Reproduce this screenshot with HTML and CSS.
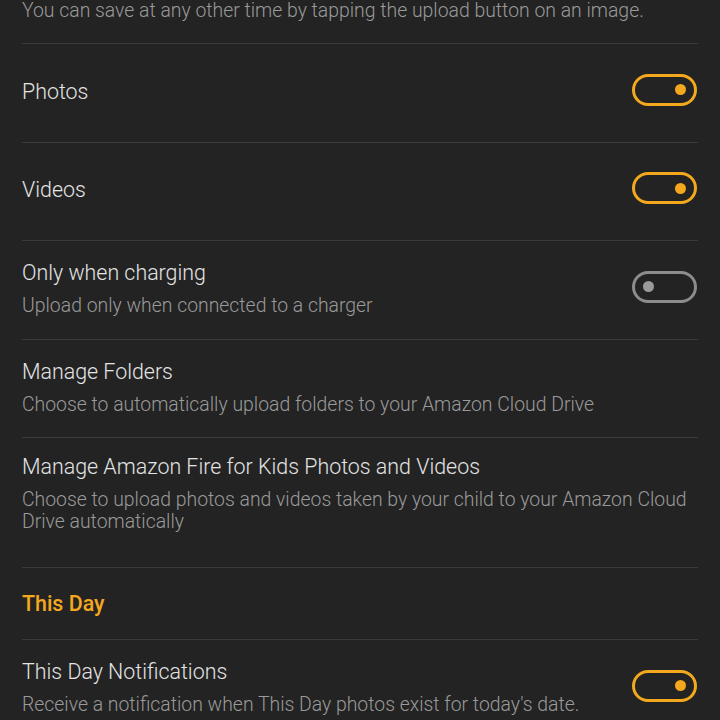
FILE: index.html
```html
<!DOCTYPE html>
<html lang="en">
<head>
  <meta charset="UTF-8">
  <meta name="viewport" content="width=device-width, initial-scale=1.0">
  <title>Auto-Save Settings</title>
  <link rel="stylesheet" href="styles.css">
</head>
<body>
  <ul class="settings">
    <!-- tail of the auto-save description, scrolled up -->
    <li class="item item-note">
      <p class="sub">You can save at any other time by tapping the upload button on an image.</p>
    </li>

    <li class="item">
      <div class="item-text single">
        <p class="title">Photos</p>
      </div>
      <span class="toggle on"><span class="knob"></span></span>
    </li>

    <li class="item">
      <div class="item-text single">
        <p class="title">Videos</p>
      </div>
      <span class="toggle on"><span class="knob"></span></span>
    </li>

    <li class="item">
      <div class="item-text">
        <p class="title">Only when charging</p>
        <p class="sub">Upload only when connected to a charger</p>
      </div>
      <span class="toggle"><span class="knob"></span></span>
    </li>

    <li class="item">
      <div class="item-text">
        <p class="title">Manage Folders</p>
        <p class="sub">Choose to automatically upload folders to your Amazon Cloud Drive</p>
      </div>
    </li>

    <li class="item">
      <div class="item-text tall">
        <p class="title">Manage Amazon Fire for Kids Photos and Videos</p>
        <p class="sub">Choose to upload photos and videos taken by your child to your Amazon Cloud Drive automatically</p>
      </div>
    </li>

    <!-- Section: This Day -->
    <li class="item section">
      <h2>This Day</h2>
    </li>

    <li class="item">
      <div class="item-text">
        <p class="title">This Day Notifications</p>
        <p class="sub">Receive a notification when This Day photos exist for today's date.</p>
      </div>
      <span class="toggle on"><span class="knob"></span></span>
    </li>
  </ul>
</body>
</html>
```

FILE: styles.css
```css
/* General Reset */
* {
  margin: 0;
  padding: 0;
  box-sizing: border-box;
}

body {
  font-family: 'Roboto', 'Liberation Sans', sans-serif;
  font-weight: 300;
  background-color: #232323;
  color: #e4e4e4;
  overflow: hidden;
}

/* Settings list */
.settings {
  list-style: none;
  margin: 0 22px;
}

.item {
  display: flex;
  align-items: center;
  min-height: 98.5px;
  border-bottom: 1px solid #3a3a3a;
}

.item-note {
  min-height: 0;
  padding-bottom: 21px;
}

.item-text {
  flex: 1;
  padding: 17px 0 21px;
}

.item-text.single {
  padding: 0 0 2px;
}

.item-text.tall {
  padding: 14px 0 34px;
}

.title {
  font-size: 21.4px;
  line-height: 30px;
  color: #e4e4e4;
}

.sub {
  font-size: 19.4px;
  line-height: 22px;
  color: #9a9a9a;
}

.title + .sub {
  margin-top: 7px;
}

/* Section header */
.item.section {
  min-height: 0;
  padding: 21px 0 20px;
}

.section h2 {
  font-size: 21.4px;
  line-height: 30px;
  font-weight: 500;
  color: #f3a81e;
}

/* Toggle switch */
.toggle {
  flex: none;
  display: flex;
  align-items: center;
  justify-content: flex-start;
  width: 65px;
  height: 32px;
  margin: 0 1px 6px 20px;
  padding: 0 8px;
  border: 3px solid #8c8c8c;
  border-radius: 16px;
}

.toggle .knob {
  width: 11px;
  height: 11px;
  border-radius: 50%;
  background-color: #9a9a9a;
}

.toggle.on {
  justify-content: flex-end;
  border-color: #f3a81e;
}

.toggle.on .knob {
  background-color: #f3a81e;
}
```
